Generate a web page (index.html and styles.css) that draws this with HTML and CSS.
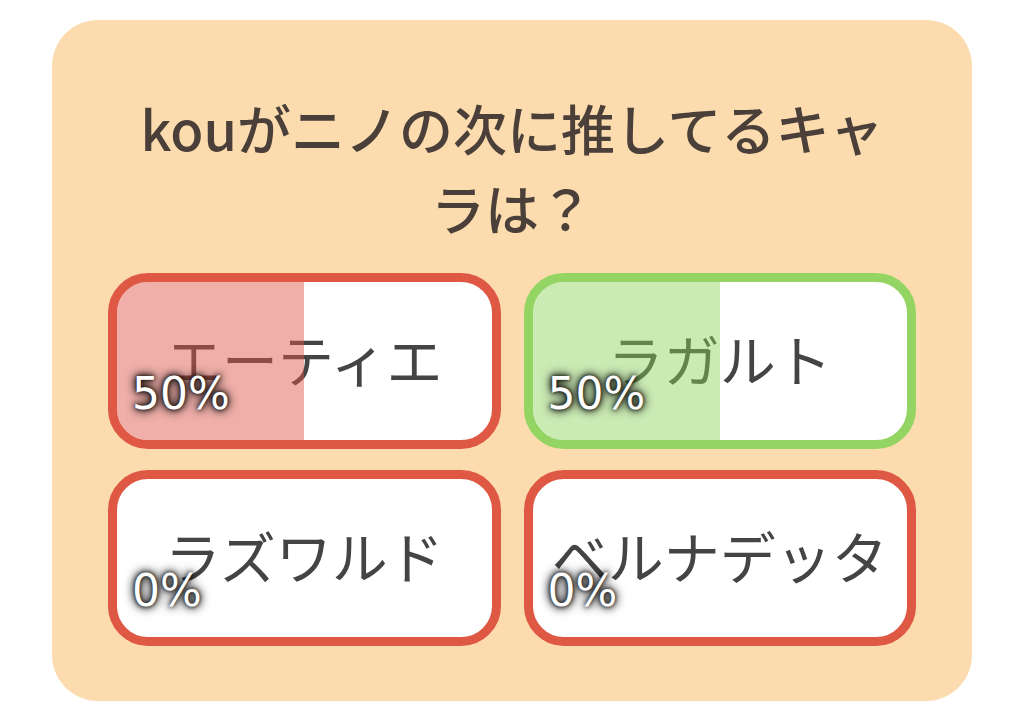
FILE: index.html
```html
<!DOCTYPE html>
<html>
	<head>
		<meta charset=utf-8>
		<meta name="viewport" content="width=device-width, initial-scale=1">
		<title>投票</title>
		<link rel="stylesheet" href="styles.css">
	</head>
	<body>
		<div class="poll">
			<h1 class="poll-title">kouがニノの次に推してるキャラは？</h1>
			<div class="choices">
				<div class="choice">
					<span class="choice-name">エーティエ</span>
					<div class="choice-fill" style="width: 50%"></div>
					<span class="choice-rate">50%</span>
				</div>
				<div class="choice correct">
					<span class="choice-name">ラガルト</span>
					<div class="choice-fill" style="width: 50%"></div>
					<span class="choice-rate">50%</span>
				</div>
				<div class="choice">
					<span class="choice-name">ラズワルド</span>
					<div class="choice-fill" style="width: 0%"></div>
					<span class="choice-rate">0%</span>
				</div>
				<div class="choice">
					<span class="choice-name">ベルナデッタ</span>
					<div class="choice-fill" style="width: 0%"></div>
					<span class="choice-rate">0%</span>
				</div>
			</div>
		</div>
	</body>
</html>
```

FILE: styles.css
```css
body { margin: 0; padding: 0; background: #fff; overflow: hidden; }

.poll {
	width: 920px;
	margin: 20px 0 0 52px;
	padding: 68px 56px 55px;
	box-sizing: border-box;
	background: #fcdcae;
	border-radius: 46px;
	font-family: 'Noto Sans CJK JP', 'Noto Sans', sans-serif;
}

.poll-title {
	margin: 0 auto 25px;
	max-width: 790px;
	font-size: 54px;
	font-weight: 500;
	line-height: 80px;
	text-align: center;
	color: #4b4039;
}

.choices {
	display: grid;
	grid-template-columns: 1fr 1fr;
	column-gap: 23px;
	row-gap: 21px;
}

.choice {
	position: relative;
	height: 176px;
	box-sizing: border-box;
	padding-bottom: 8px;
	border: 9px solid #de5844;
	border-radius: 40px;
	background: #fff;
	overflow: hidden;
	display: flex;
	align-items: center;
	justify-content: center;
}
.choice.correct { border-color: #93d463; }

.choice-name {
	font-size: 56px;
	color: #444;
	white-space: nowrap;
}

/* result bar drawn over the name so the text takes its tint */
.choice-fill {
	position: absolute;
	top: 0; left: 0; bottom: 0;
	background: rgba(224, 84, 72, 0.47);
}
.correct .choice-fill { background: rgba(140, 210, 92, 0.45); }

.choice-rate {
	position: absolute;
	left: 15px; top: 90px;
	font-family: 'DejaVu Sans', sans-serif;
	font-size: 44px;
	line-height: 1;
	color: #fff;
	text-shadow: 0 0 4px #000, 0 0 8px #000, 0 0 12px rgba(0, 0, 0, 0.8);
}
```
